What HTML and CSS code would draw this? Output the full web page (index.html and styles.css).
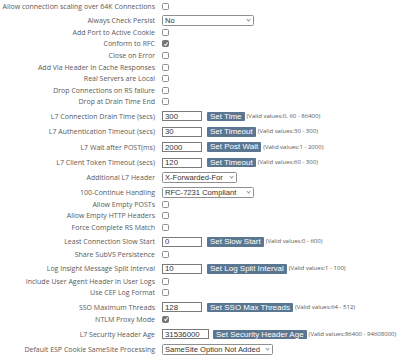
FILE: index.html
```html
<!DOCTYPE html>
<html lang="en">
<head>
<meta charset="utf-8">
<title>L7 Configuration</title>
<link rel="stylesheet" href="styles.css">
</head>
<body>
<div class="form">
  <div class="row chk"><label class="lbl">Allow connection scaling over 64K Connections</label><div class="ctl"><input type="checkbox" class="cb"></div></div>
  <div class="row sel"><label class="lbl">Always Check Persist</label><div class="ctl"><div class="select w-no"><select><option>No</option></select></div></div></div>
  <div class="row chk"><label class="lbl">Add Port to Active Cookie</label><div class="ctl"><input type="checkbox" class="cb"></div></div>
  <div class="row chk"><label class="lbl">Conform to RFC</label><div class="ctl"><input type="checkbox" class="cb" checked></div></div>
  <div class="row chk"><label class="lbl">Close on Error</label><div class="ctl"><input type="checkbox" class="cb"></div></div>
  <div class="row chk"><label class="lbl">Add Via Header In Cache Responses</label><div class="ctl"><input type="checkbox" class="cb"></div></div>
  <div class="row chk"><label class="lbl">Real Servers are Local</label><div class="ctl"><input type="checkbox" class="cb"></div></div>
  <div class="row chk"><label class="lbl">Drop Connections on RS failure</label><div class="ctl"><input type="checkbox" class="cb"></div></div>
  <div class="row chk"><label class="lbl">Drop at Drain Time End</label><div class="ctl"><input type="checkbox" class="cb"></div></div>
  <div class="row inp"><label class="lbl">L7 Connection Drain Time (secs)</label><div class="ctl"><input type="text" class="txt" value="300"><button class="btn">Set Time</button><span class="valid">(Valid values:0, 60 - 86400)</span></div></div>
  <div class="row inp"><label class="lbl">L7 Authentication Timeout (secs)</label><div class="ctl"><input type="text" class="txt" value="30"><button class="btn">Set Timeout</button><span class="valid">(Valid values:30 - 300)</span></div></div>
  <div class="row inp"><label class="lbl">L7 Wait after POST(ms)</label><div class="ctl"><input type="text" class="txt" value="2000"><button class="btn">Set Post Wait</button><span class="valid">(Valid values:1 - 2000)</span></div></div>
  <div class="row inp"><label class="lbl">L7 Client Token Timeout (secs)</label><div class="ctl"><input type="text" class="txt" value="120"><button class="btn">Set Timeout</button><span class="valid">(Valid values:60 - 300)</span></div></div>
  <div class="row sel"><label class="lbl">Additional L7 Header</label><div class="ctl"><div class="select w-xff"><select><option>X-Forwarded-For</option></select></div></div></div>
  <div class="row sel"><label class="lbl">100-Continue Handling</label><div class="ctl"><div class="select w-rfc"><select><option>RFC-7231 Compliant</option></select></div></div></div>
  <div class="row chk"><label class="lbl">Allow Empty POSTs</label><div class="ctl"><input type="checkbox" class="cb"></div></div>
  <div class="row chk"><label class="lbl">Allow Empty HTTP Headers</label><div class="ctl"><input type="checkbox" class="cb"></div></div>
  <div class="row chk"><label class="lbl">Force Complete RS Match</label><div class="ctl"><input type="checkbox" class="cb"></div></div>
  <div class="row inp"><label class="lbl">Least Connection Slow Start</label><div class="ctl"><input type="text" class="txt" value="0"><button class="btn">Set Slow Start</button><span class="valid">(Valid values:0 - 600)</span></div></div>
  <div class="row chk"><label class="lbl">Share SubVS Persistence</label><div class="ctl"><input type="checkbox" class="cb"></div></div>
  <div class="row inp"><label class="lbl">Log Insight Message Split Interval</label><div class="ctl"><input type="text" class="txt" value="10"><button class="btn">Set Log Split Interval</button><span class="valid">(Valid values:1 - 100)</span></div></div>
  <div class="row chk"><label class="lbl">Include User Agent Header in User Logs</label><div class="ctl"><input type="checkbox" class="cb"></div></div>
  <div class="row chk"><label class="lbl">Use CEF Log Format</label><div class="ctl"><input type="checkbox" class="cb"></div></div>
  <div class="row inp"><label class="lbl">SSO Maximum Threads</label><div class="ctl"><input type="text" class="txt" value="128"><button class="btn">Set SSO Max Threads</button><span class="valid">(Valid values:64 - 512)</span></div></div>
  <div class="row chk"><label class="lbl">NTLM Proxy Mode</label><div class="ctl"><input type="checkbox" class="cb" checked></div></div>
  <div class="row inp"><label class="lbl">L7 Security Header Age</label><div class="ctl"><input type="text" class="txt wide" value="31536000"><button class="btn">Set Security Header Age</button><span class="valid">(Valid values:86400 - 94608000)</span></div></div>
  <div class="row sel"><label class="lbl">Default ESP Cookie SameSite Processing</label><div class="ctl"><div class="select w-ss"><select><option>SameSite Option Not Added</option></select></div></div></div>
</div>
</body>
</html>
```

FILE: styles.css
```css
html, body {
  margin: 0;
  padding: 0;
  background: #ffffff;
}

.form {
  padding-top: 0.4px;
}

.row {
  display: grid;
  grid-template-columns: 155px auto;
  column-gap: 7px;
  align-items: center;
}

.row.chk {
  padding: 2.3px 0 2.3px;
}

.row.inp {
  padding: 3.8px 0 1.6px;
}

.row.sel {
  padding: 3px 0 0.5px;
}

.lbl {
  display: block;
  text-align: right;
  font-family: "Open Sans", "DejaVu Sans", sans-serif;
  font-size: 7px;
  line-height: 7px;
  height: 7px;
  color: #5a5a5a;
  white-space: nowrap;
}

.ctl {
  display: flex;
  align-items: center;
}

.cb {
  -webkit-appearance: none;
  appearance: none;
  box-sizing: border-box;
  width: 7px;
  height: 7px;
  margin: 0;
  border: 1px solid #8d8d8d;
  border-radius: 1.5px;
  background: #ffffff;
  position: relative;
}

.cb:checked {
  background: #767676;
  border-color: #767676;
}

.cb:checked::after {
  content: "";
  position: absolute;
  left: 1.6px;
  top: 0.2px;
  width: 1.4px;
  height: 3px;
  border-right: 1px solid #ffffff;
  border-bottom: 1px solid #ffffff;
  transform: rotate(40deg);
}

.txt {
  box-sizing: border-box;
  width: 40px;
  height: 10px;
  margin: 0;
  padding: 0 2px;
  border: 1px solid #7a7a7a;
  border-radius: 0;
  font-family: "Liberation Sans", Arial, sans-serif;
  font-size: 7.8px;
  color: #333333;
  background: #ffffff;
  outline: none;
}

.txt.wide {
  width: 47px;
}

.btn {
  box-sizing: border-box;
  height: 9.5px;
  margin: 0 0 0 5px;
  padding: 0 3px;
  border: none;
  border-radius: 1px;
  background: #5b7690;
  color: #ffffff;
  font-family: "Liberation Sans", Arial, sans-serif;
  font-size: 8px;
  line-height: 9.5px;
  white-space: nowrap;
}

.txt.wide + .btn {
  margin-left: 4px;
}

.valid {
  margin-left: 2px;
  font-family: "Open Sans", "DejaVu Sans", sans-serif;
  font-size: 6px;
  line-height: 7px;
  color: #555555;
  white-space: nowrap;
}

.select {
  position: relative;
  display: block;
  height: 11px;
}

.select select {
  -webkit-appearance: none;
  appearance: none;
  display: block;
  box-sizing: border-box;
  width: 100%;
  height: 11px;
  min-height: 0;
  margin: 0;
  padding: 0 7px 0 2px;
  border: 1px solid #8f8f8f;
  border-radius: 1.5px;
  background: #ffffff;
  font-family: "Liberation Sans", Arial, sans-serif;
  font-size: 7.6px;
  line-height: 9px;
  color: #333333;
  outline: none;
}

.select::after {
  content: "";
  position: absolute;
  right: 3.8px;
  top: 3px;
  width: 2.2px;
  height: 2.2px;
  border-right: 0.7px solid #9a9a9a;
  border-bottom: 0.7px solid #9a9a9a;
  transform: rotate(45deg);
}

.w-no { width: 92px; }
.w-xff { width: 75px; }
.w-rfc { width: 92px; }
.w-ss { width: 111px; }
```
